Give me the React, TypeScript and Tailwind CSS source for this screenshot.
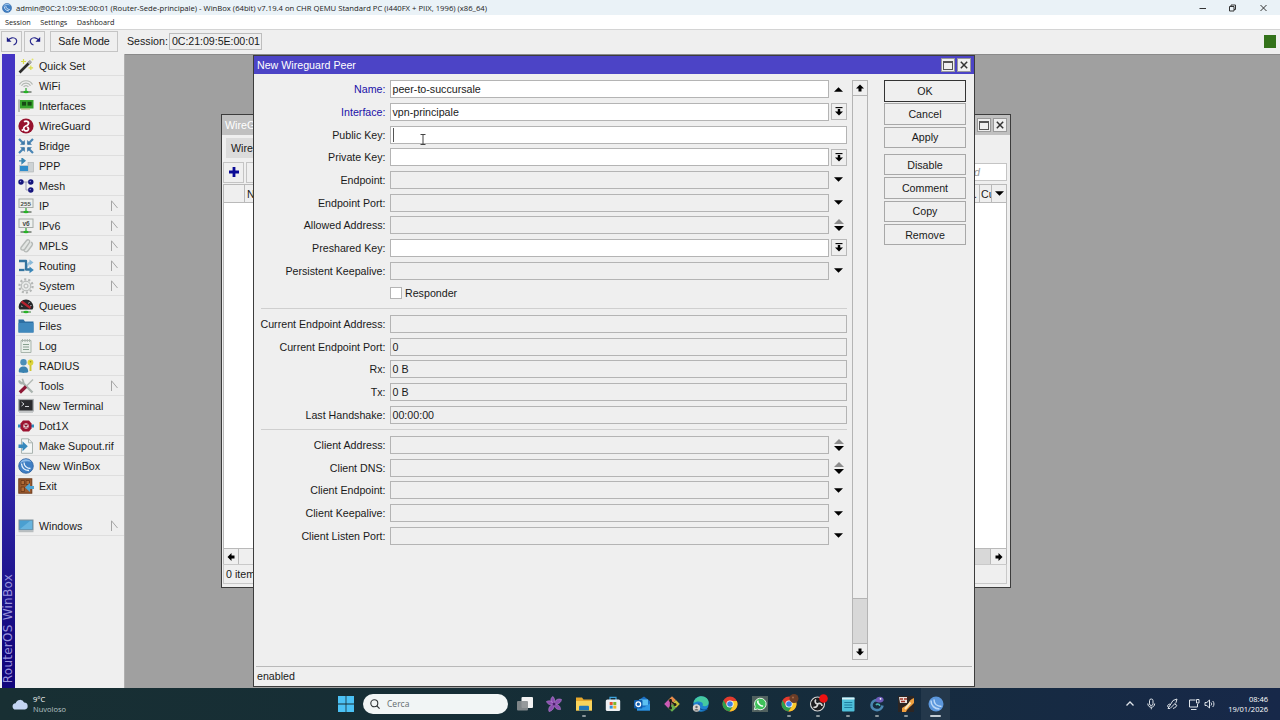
import type { ReactNode } from 'react';

type FieldKind = 'up' | 'select' | 'plain' | 'down' | 'updown' | 'readonly';

interface Field {
    label: string;
    value?: string;
    kind: FieldKind;
    white?: boolean;
    changed?: boolean;
    caret?: boolean;
}

const mainFields: Field[] = [
    { label: 'Name:', value: 'peer-to-succursale', kind: 'up', white: true, changed: true },
    { label: 'Interface:', value: 'vpn-principale', kind: 'select', white: true, changed: true },
    { label: 'Public Key:', kind: 'plain', white: true, caret: true },
    { label: 'Private Key:', kind: 'select', white: true },
    { label: 'Endpoint:', kind: 'down' },
    { label: 'Endpoint Port:', kind: 'down' },
    { label: 'Allowed Address:', kind: 'updown' },
    { label: 'Preshared Key:', kind: 'select', white: true },
    { label: 'Persistent Keepalive:', kind: 'down' },
];

const statusFields: Field[] = [
    { label: 'Current Endpoint Address:', kind: 'readonly' },
    { label: 'Current Endpoint Port:', value: '0', kind: 'readonly' },
    { label: 'Rx:', value: '0 B', kind: 'readonly' },
    { label: 'Tx:', value: '0 B', kind: 'readonly' },
    { label: 'Last Handshake:', value: '00:00:00', kind: 'readonly' },
];

const clientFields: Field[] = [
    { label: 'Client Address:', kind: 'updown' },
    { label: 'Client DNS:', kind: 'updown' },
    { label: 'Client Endpoint:', kind: 'down' },
    { label: 'Client Keepalive:', kind: 'down' },
    { label: 'Client Listen Port:', kind: 'down' },
];

function Svg16({ children, className = 'w-4 h-4' }: { children: ReactNode; className?: string }) {
    return (
        <svg viewBox="0 0 16 16" className={`${className} shrink-0`} fill="none">
            {children}
        </svg>
    );
}

function WinBoxIcon({ className }: { className?: string }) {
    return (
        <Svg16 className={className}>
            <circle cx="8" cy="8" r="7.3" fill="#3f7fc4" stroke="#2c5f9e" strokeWidth=".8" />
            <path d="M2 5.5A6.5 6.5 0 0 1 13.5 4C10 2.500 5 3 2 5.500z" fill="#8fbdea" />
            <path d="M3.500 5.500c.3 4 3 6.800 7.500 7" stroke="#e6f1fb" strokeWidth="1.300" />
            <path d="M6 4.500c.2 3.500 2.500 5.700 6.500 6" stroke="#e6f1fb" strokeWidth="1.300" />
        </Svg16>
    );
}

const netStem = (
    <>
        <path d="M8 10v4" stroke="#2fa52f" strokeWidth="1.200" />
        <path d="M2.500 14h11" stroke="#3c4a3c" strokeWidth="1.100" />
        <ellipse cx="8" cy="14" rx="2.600" ry="1.300" fill="#27b327" />
    </>
);

const menuItems: { label: string; icon: ReactNode; sub?: boolean }[] = [
    {
        label: 'Quick Set',
        icon: (
            <Svg16>
                <path d="M1.500 14.500L12.500 3.500" stroke="#2c2c2c" strokeWidth="2.600" />
                <path d="M10.500 5.500l2.500-2.500" stroke="#a9a9a9" strokeWidth="2.600" />
                <path d="M5.500 1v5M3 3.500h5M12.800 7.500v4.500M10.500 9.800h4.600" stroke="#d9dc4a" strokeWidth="1.200" />
                <circle cx="14.500" cy="1.500" r="1" fill="#e4e66a" />
            </Svg16>
        ),
    },
    {
        label: 'WiFi',
        icon: (
            <Svg16>
                <path d="M1.500 6.500a7.500 7.500 0 0 1 13 0M3.500 7.700a5.200 5.200 0 0 1 9 0M5.600 8.900a2.900 2.900 0 0 1 4.800 0" stroke="#b3b8b3" strokeWidth="1.200" />
                {netStem}
            </Svg16>
        ),
    },
    {
        label: 'Interfaces',
        icon: (
            <Svg16>
                <path d="M1 1.500v12.500" stroke="#9a9f9a" strokeWidth="1.300" />
                <rect x="2" y="2" width="13.500" height="8.500" fill="#37a32d" />
                <rect x="4" y="3.800" width="4" height="3.800" fill="#174a14" />
                <rect x="9.600" y="3.800" width="4" height="3.800" fill="#174a14" />
                <path d="M3 11h9" stroke="#a9b36a" strokeWidth="1" />
            </Svg16>
        ),
    },
    {
        label: 'WireGuard',
        icon: (
            <Svg16>
                <circle cx="8" cy="8" r="7.600" fill="#97122e" />
                <path d="M6 3.800c2.500-1.800 5.500.2 4.200 2.500C9.300 8 6 7.700 5.700 10.200c-.2 2 1.800 3.300 3.700 2.400 1.800-1 1.300-3.400-.6-3.400" stroke="#fff" strokeWidth="1.800" />
                <circle cx="4.500" cy="12" r="1" fill="#fff" />
            </Svg16>
        ),
    },
    {
        label: 'Bridge',
        icon: (
            <Svg16>
                <path d="M1 1l5 5M15 1l-5 5M1 15l5-5M15 15l-5-5" stroke="#4a86b5" strokeWidth="2.200" />
                <path d="M6.800 2v4.800H2zM9.200 2v4.800H14zM6.800 14V9.200H2zM9.200 14V9.200H14z" fill="#3d78a8" />
            </Svg16>
        ),
    },
    {
        label: 'PPP',
        icon: (
            <Svg16>
                <path d="M1 2.800h4M4 .3l3 2.500-3 2.500z" stroke="#3a86b0" fill="#3a86b0" strokeWidth="1.300" />
                <rect x="10" y="4.500" width="5.500" height="9.500" fill="#cdd2d4" stroke="#a8adaf" strokeWidth=".6" />
                <rect x="1" y="7" width="10" height="7.500" fill="#bfc8cc" />
                <rect x="2" y="8" width="8" height="5" fill="#2f8dcb" />
            </Svg16>
        ),
    },
    {
        label: 'Mesh',
        icon: (
            <Svg16>
                <path d="M3 4h9M8 4v8h5" stroke="#9a9ab8" strokeWidth="1" />
                <circle cx="3" cy="4" r="2.700" fill="#15157c" />
                <circle cx="12.800" cy="4" r="2.700" fill="#15157c" />
                <circle cx="12.800" cy="12" r="2.700" fill="#15157c" />
                <circle cx="2.500" cy="3.500" r=".7" fill="#8d8de0" />
                <circle cx="12.300" cy="3.500" r=".7" fill="#8d8de0" />
                <circle cx="12.300" cy="11.500" r=".7" fill="#8d8de0" />
            </Svg16>
        ),
    },
    {
        label: 'IP',
        sub: true,
        icon: (
            <Svg16>
                <rect x="1" y="1" width="14" height="8.500" fill="#eef1ef" stroke="#a7aca8" />
                <text x="2.600" y="7.500" fontSize="6.200" fontWeight="bold" fontFamily="Liberation Sans" fill="#4a4f4a">255</text>
                {netStem}
            </Svg16>
        ),
    },
    {
        label: 'IPv6',
        sub: true,
        icon: (
            <Svg16>
                <rect x="1" y="1" width="14" height="8.500" fill="#eef1ef" stroke="#a7aca8" />
                <text x="4.400" y="7.600" fontSize="6.500" fontWeight="bold" fontFamily="Liberation Sans" fill="#4a4f4a">v6</text>
                {netStem}
            </Svg16>
        ),
    },
    {
        label: 'MPLS',
        sub: true,
        icon: (
            <Svg16>
                <path d="M3 9.500L8.500 2.500c1.500-1.500 4-.5 3 2L7 11c-1.500 2-5 1-4-1.500zM6 12.500c1 2 3 1.500 4 .2l4-5.200c1-1.700.3-3-1.200-3.300" stroke="#b5b9b7" strokeWidth="1.400" fill="#e2e5e3" />
            </Svg16>
        ),
    },
    {
        label: 'Routing',
        sub: true,
        icon: (
            <Svg16>
                <path d="M7 11.500c2-.5 2-6.500 5-7" stroke="#9dc4dd" strokeWidth="2" />
                <path d="M11.500 1.500l4 3-4 3z" fill="#8ab9d8" />
                <path d="M1 3h7v8.500h4" stroke="#35759f" strokeWidth="2.300" strokeLinejoin="round" />
                <path d="M1 12h5.500" stroke="#35759f" strokeWidth="2.300" />
                <path d="M11.500 8.500l4.300 3.400-4.300 3.400z" fill="#3a86b8" />
            </Svg16>
        ),
    },
    {
        label: 'System',
        sub: true,
        icon: (
            <Svg16>
                <circle cx="8" cy="8" r="6.600" stroke="#b3b6b5" strokeWidth="2.200" strokeDasharray="2.100 2.050" />
                <circle cx="8" cy="8" r="4.800" fill="#e6e8e7" stroke="#b3b6b5" strokeWidth="1" />
                <circle cx="8" cy="8" r="2" fill="#efefef" stroke="#b3b6b5" />
            </Svg16>
        ),
    },
    {
        label: 'Queues',
        icon: (
            <Svg16>
                <path d="M.6 9a7.400 7.400 0 1 1 14.800 0c0 1-.5 1.800-1 2.500H1.600c-.5-.7-1-1.500-1-2.500z" fill="#26282a" />
                <path d="M3 8l1.500.5M5 4.500l1 1.300M11.500 4l-1 1.500M13.500 7.500L12 8" stroke="#c9cccd" strokeWidth=".9" />
                <path d="M3.500 3.500l9 6.500" stroke="#b5222e" strokeWidth="2.200" />
                <path d="M3 14h10" stroke="#3c7a3c" />
                <ellipse cx="8" cy="14" rx="2.600" ry="1.300" fill="#27b327" />
            </Svg16>
        ),
    },
    {
        label: 'Files',
        icon: (
            <Svg16>
                <path d="M.5 1.500h5l1.500 2h8.500v11H.5z" fill="#2d6fa3" />
                <path d="M.5 5h15v9.500H.5z" fill="#3f88bd" />
            </Svg16>
        ),
    },
    {
        label: 'Log',
        icon: (
            <Svg16>
                <path d="M3 2.500h10v12H3z" fill="#e9efea" stroke="#a9b5ad" />
                <path d="M4.500 1v3M7 1v3M9.300 1v3M11.600 1v3" stroke="#a9b5ad" strokeWidth="1" />
                <path d="M5 6.500h6M5 9h6M5 11.500h6" stroke="#87a08f" strokeWidth="1.100" />
            </Svg16>
        ),
    },
    {
        label: 'RADIUS',
        icon: (
            <Svg16>
                <circle cx="5.500" cy="4.300" r="3.200" fill="#4a8fb8" />
                <path d="M.8 14c-.3-4 2-5.500 4.700-5.500S10.400 10 10.200 14c-2 1.200-7.500 1.200-9.400 0z" fill="#3a82b0" />
                <circle cx="12.500" cy="4.500" r="2.900" fill="#dcd43a" />
                <circle cx="12.500" cy="3.700" r=".8" fill="#8f8a1c" />
                <path d="M12.500 7v6" stroke="#cfc52e" strokeWidth="1.900" />
            </Svg16>
        ),
    },
    {
        label: 'Tools',
        sub: true,
        icon: (
            <Svg16>
                <path d="M14.500 14.500L5 5" stroke="#a9b3ae" strokeWidth="2.300" />
                <path d="M1 2.500L4 5l1.500-1L4.300.8M1 2.500c0 2 1.500 3.500 3.500 3L6 4" stroke="#a9b3ae" strokeWidth="1.600" />
                <path d="M15 1.500L8 8.500" stroke="#b4bbb7" strokeWidth="1.500" />
                <path d="M8 8.500L1.800 14.500" stroke="#8e1835" strokeWidth="3.200" />
            </Svg16>
        ),
    },
    {
        label: 'New Terminal',
        icon: (
            <Svg16>
                <rect x=".8" y="1.500" width="14.400" height="11.500" fill="#2b2c2e" stroke="#a8acae" strokeWidth="1.200" />
                <path d="M3.500 4l2.500 2-2.500 2M7 8.500h4" stroke="#d5d8da" strokeWidth="1" />
                <path d="M1 14.300h14" stroke="#c0c3c5" strokeWidth="1.200" />
            </Svg16>
        ),
    },
    {
        label: 'Dot1X',
        icon: (
            <Svg16>
                <path d="M0 8h3M13 8h3" stroke="#2f8dc0" strokeWidth="3" />
                <path d="M5 2.500h6L13.500 5.500v5L11 13.500H5L2.500 10.500v-5z" fill="#9c1330" />
                <circle cx="8" cy="8" r="2.700" fill="#e9dcdf" />
                <path d="M6.500 6.500l3 3M9.500 6.500l-3 3" stroke="#8d1029" strokeWidth="1.200" />
            </Svg16>
        ),
    },
    {
        label: 'Make Supout.rif',
        icon: (
            <Svg16>
                <path d="M3.500.8h7l4 4v10.500h-11z" fill="#f3f6f5" stroke="#a9b3b0" />
                <path d="M10.500.8v4h4" stroke="#a9b3b0" />
                <path d="M.5 6.500h4V3.300l5.300 5-5.300 5V10h-4z" fill="#3689bd" />
            </Svg16>
        ),
    },
    { label: 'New WinBox', icon: <WinBoxIcon className="w-4 h-4" /> },
    {
        label: 'Exit',
        icon: (
            <Svg16>
                <rect x=".8" y=".8" width="13" height="14.400" fill="#9c5a2e" stroke="#6d3a1a" />
                <path d="M3 2.500h3.500v4H3zM8 2.500h3.500v4H8zM3 9h3.500v4.500H3z" stroke="#6d3a1a" strokeWidth=".9" fill="#b06c3a" />
                <path d="M16 8h-4V5L7 9.500l5 4.500v-3h4z" fill="#4fa3d3" />
            </Svg16>
        ),
    },
];

function UpDown() {
    return (
        <svg viewBox="0 0 10 12" className="w-[10px] h-3">
            <path d="M0 5L5 0l5 5z" fill="#8c8c8c" />
            <path d="M0 7h10l-5 5z" fill="#000" />
        </svg>
    );
}

function Triangle({ up }: { up?: boolean }) {
    return (
        <svg viewBox="0 0 10 5" className="w-[9px] h-[5px]">
            <path d={up ? 'M0 5L5 0l5 5z' : 'M0 0h10L5 5z'} fill="#000" />
        </svg>
    );
}

// Short, fat arrow used by the scrollbar ends
function ScrollArrow({ className = '' }: { className?: string }) {
    return (
        <svg viewBox="0 0 8 8" className={`w-2 h-2 ${className}`}>
            <path d="M4 .5L8 4.500H5.500V7.500h-3V4.500H0z" fill="#000" />
        </svg>
    );
}

function FieldControl({ kind }: { kind: FieldKind }) {
    if (kind === 'select') {
        return (
            <div className="w-4 h-[17px] ml-[2px] border border-[#b9b9b9] flex items-center justify-center">
                <svg viewBox="0 0 8 9" className="w-2 h-[9px]">
                    <path d="M.5.600h7" stroke="#000" strokeWidth="1.100" />
                    <path d="M2.800 2h2.400v2.500H8L4 8.500 0 4.500h2.800z" fill="#000" />
                </svg>
            </div>
        );
    }
    return (
        <div className="w-[18px] pl-px flex items-center justify-center">
            {kind === 'up' && <Triangle up />}
            {kind === 'down' && <Triangle />}
            {kind === 'updown' && <UpDown />}
        </div>
    );
}

function FieldRow({ field }: { field: Field }) {
    const wide = field.kind === 'plain' || field.kind === 'readonly';
    return (
        <div className="flex items-center h-[22.67px]">
            <div className={`w-[132px] text-right pr-[4.500px] shrink-0 whitespace-nowrap ${field.changed ? 'text-[#1c0fa8]' : 'text-[#1a1a1a]'}`}>
                {field.label}
            </div>
            <div
                className={`h-[18px] border border-[#b4b4b4] flex items-center pl-[1.500px] ${wide ? 'w-[457px]' : 'w-[439px]'} ${field.white ? 'bg-white' : ''}`}
            >
                {field.value}
                {field.caret && <span className="w-px h-[14px] bg-[#555]" />}
            </div>
            {!wide && <FieldControl kind={field.kind} />}
        </div>
    );
}

function Divider() {
    return (
        <div className="h-2 flex items-center">
            <div className="ml-[3px] w-[587px] h-px bg-[#cfcfcf]" />
        </div>
    );
}

function CaptionButtons() {
    return (
        <div className="flex gap-[2px]">
            <div className="w-[14px] h-[14px] bg-[#efefef] border border-[#9a9a9a] flex items-center justify-center">
                <div className="w-[10px] h-[9px] border border-t-2 border-[#555]" />
            </div>
            <div className="w-[14px] h-[14px] bg-[#efefef] border border-[#9a9a9a] flex items-center justify-center">
                <svg viewBox="0 0 8 8" className="w-2 h-2">
                    <path d="M.8.8l6.400 6.400M7.200.8L.8 7.200" stroke="#333" strokeWidth="1.500" />
                </svg>
            </div>
        </div>
    );
}

function ActionButton({ label, primary }: { label: string; primary?: boolean }) {
    return (
        <div
            className={`h-[21.500px] mb-[1.830px] border flex items-center justify-center ${primary ? 'border-[#333]' : 'border-[#a8a8a8]'}`}
        >
            {label}
        </div>
    );
}

function PeerWindow() {
    return (
        <div className="absolute left-[128px] top-0 w-[722px] h-[632px] bg-[#efefef] border border-[#3c3c3c] flex flex-col">
            <div className="h-[18px] shrink-0 bg-[#4c44c6] flex items-center justify-between pl-[3px] pr-[3px] text-white">
                <span>New Wireguard Peer</span>
                <CaptionButtons />
            </div>
            <div className="flex grow pt-1">
                <div className="w-[593px] pl-[4px]">
                    {mainFields.map((f) => (
                        <FieldRow key={f.label} field={f} />
                    ))}
                    <div className="h-[22.67px] flex items-center pl-[132px]">
                        <div className="w-[12px] h-[12px] border border-[#b4b4b4] bg-white" />
                        <span className="pl-[3px]">Responder</span>
                    </div>
                    <Divider />
                    {statusFields.map((f) => (
                        <FieldRow key={f.label} field={f} />
                    ))}
                    <Divider />
                    {clientFields.map((f) => (
                        <FieldRow key={f.label} field={f} />
                    ))}
                </div>
                <div className="w-4 h-[580px] mt-[2px] ml-[5px] border border-[#b4b4b4] flex flex-col">
                    <div className="h-[15px] border-b border-[#b4b4b4] flex items-center justify-center">
                        <ScrollArrow />
                    </div>
                    <div className="grow" />
                    <div className="h-[46px] bg-[#d8d8d8] border-y border-[#b4b4b4]" />
                    <div className="h-[15px] flex items-center justify-center">
                        <ScrollArrow className="rotate-180" />
                    </div>
                </div>
                <div className="w-[82px] ml-4 mt-[2px]">
                    <ActionButton label="OK" primary />
                    <ActionButton label="Cancel" />
                    <ActionButton label="Apply" />
                    <div className="h-1" />
                    <ActionButton label="Disable" />
                    <ActionButton label="Comment" />
                    <ActionButton label="Copy" />
                    <ActionButton label="Remove" />
                </div>
            </div>
            <div className="h-[20px] shrink-0 ml-[2px] mr-[2px] border-t border-[#b9b9b9] flex items-center pl-px pb-[2px]">
                enabled
            </div>
        </div>
    );
}

function WireGuardWindow() {
    return (
        <div className="absolute left-[96px] top-[59px] w-[790px] h-[474px] bg-[#efefef] border border-[#3c3c3c] flex flex-col pl-px pr-[3px] overflow-hidden">
            <div className="h-5 shrink-0 -ml-px -mr-[3px] bg-[#c0c0c0] flex items-center justify-between pl-[3px] pr-[3px] text-white">
                <span>WireGuard</span>
                <CaptionButtons />
            </div>
            <div className="h-[25px] shrink-0 flex items-end pl-[3px]">
                <div className="h-[20px] mb-[2px] w-[70px] bg-[#dcdcdc] flex items-center pl-[5px]">WireGuard</div>
            </div>
            <div className="h-[24px] shrink-0 flex items-center justify-between">
                <div className="flex gap-[2px]">
                    <div className="w-[21px] h-[21px] border border-[#c4c4c4] flex items-center justify-center">
                        <svg viewBox="0 0 10 10" className="w-[10px] h-[10px]">
                            <path d="M5 0v10M0 5h10" stroke="#0a0a96" strokeWidth="2.800" />
                        </svg>
                    </div>
                    <div className="w-[21px] h-[21px] border border-[#c4c4c4]" />
                </div>
                <div className="w-[100px] h-[18px] border border-[#c4c4c4] bg-white flex items-center justify-end pr-[26px] italic text-[#999]">
                    Find
                </div>
            </div>
            <div className="grow bg-white border border-[#b9b9b9] flex flex-col">
                <div className="h-[18px] bg-[#efefef] border-b border-[#b9b9b9] flex justify-between">
                    <div className="flex items-center">
                        <div className="w-[21px] h-full border-r border-[#b9b9b9]" />
                        <span className="pl-[2px]">Name</span>
                    </div>
                    <div className="flex items-center">
                        <span className="pr-[2px]">...</span>
                        <div className="w-[12px] h-full border-l border-[#b9b9b9] overflow-hidden pl-px pt-[2px]">Cu</div>
                        <div className="w-[15px] h-full border-l border-[#b9b9b9] flex items-center justify-center">
                            <Triangle />
                        </div>
                    </div>
                </div>
            </div>
            <div className="h-[15px] shrink-0 border-x border-[#b9b9b9] bg-[#d8d8d8] flex justify-between">
                <div className="w-[15px] bg-[#efefef] border-r border-[#b9b9b9] flex items-center justify-center">
                    <ScrollArrow className="-rotate-90" />
                </div>
                <div className="w-[600px] mr-auto bg-[#efefef]" />
                <div className="w-4 bg-[#efefef] border-l border-[#b9b9b9] flex items-center justify-center">
                    <ScrollArrow className="rotate-90" />
                </div>
            </div>
            <div className="h-[20px] shrink-0 mb-[3px] border border-[#c9c9c9] flex items-center pl-[2px]">0 items</div>
        </div>
    );
}

function MenuRow({ label, icon, sub }: { label: string; icon?: ReactNode; sub?: boolean }) {
    return (
        <div className="h-5 ml-px border-b border-[#dedede] flex items-center">
            <div className="w-[23px] pl-[2px] flex">{icon}</div>
            <span className="grow whitespace-nowrap">{label}</span>
            {sub && (
                <svg viewBox="0 0 7 12" className="w-[7px] h-3 mr-[6px]">
                    <path d="M.5 11V.8L6.500 8" stroke="#a5a5a5" fill="none" />
                </svg>
            )}
        </div>
    );
}

function Sidebar() {
    return (
        <div className="flex w-[125px] shrink-0 bg-[#efefef] border-r border-[#b0b0b0]">
            <div className="w-[13px] ml-[2px] shrink-0 bg-linear-to-b from-[#4434c4] from-50% to-[#12067c] to-95% flex items-end justify-center pb-[5px]">
                <span className="[writing-mode:vertical-rl] rotate-180 font-['DejaVu_Sans'] text-[12px] leading-[13px] tracking-[0.250px] text-[#9a94dc] whitespace-nowrap">
                    RouterOS WinBox
                </span>
            </div>
            <div className="grow pt-[2px]">
                {menuItems.map((item) => (
                    <MenuRow key={item.label} label={item.label} icon={item.icon} sub={item.sub} />
                ))}
                <div className="h-5" />
                <MenuRow
                    label="Windows"
                    sub
                    icon={
                        <Svg16>
                            <rect x="1" y="2" width="14" height="10" fill="#4a9fd0" stroke="#7f8f99" />
                            <path d="M2 11L12 3h2v8z" fill="#68b4de" />
                            <path d="M.5 13.500h15" stroke="#b8bdbf" strokeWidth="1.500" />
                        </Svg16>
                    }
                />
            </div>
        </div>
    );
}

function Chrome() {
    return (
        <>
            <circle cx="8" cy="8" r="7.500" fill="#e33b2e" />
            <path d="M1.500 4.300A7.500 7.500 0 0 0 7.500 15.500L11.200 9.800 4.800 9.800z" fill="#2da04e" />
            <path d="M14.900 5H8l3.200 4.900-3.700 5.600A7.500 7.500 0 0 0 14.900 5z" fill="#f7c92c" />
            <circle cx="8" cy="8" r="3.600" fill="#fff" />
            <circle cx="8" cy="8" r="2.800" fill="#3a7de8" />
        </>
    );
}

const taskbarApps: { name: string; open?: boolean; active?: boolean; icon: ReactNode }[] = [
    {
        name: 'task-view',
        icon: (
            <>
                <rect x="4.500" y="1" width="11.500" height="11" rx="1" fill="#f2f2f2" />
                <rect x="0" y="5" width="11" height="9.500" rx="1" fill="#8b8f91" fillOpacity=".9" />
            </>
        ),
    },
    {
        name: 'flower',
        icon: (
            <>
                <path d="M8 8C4 6 4 2 7 .5 9 3 9 5 8 8zM8 8c1-4 4-6 7.500-4.500C15 7 12 8.500 8 8zM8 8c4 0 6.500 2 6.500 5.500C11 14 8.500 12 8 8zM8 8c.5 4-1.500 7-5 7.500C2 12 4 9 8 8zM8 8C4.500 9.500 1.500 8.500.5 5.500 3.500 4 6.500 5 8 8z" fill="#8c4fb0" stroke="#b883d6" strokeWidth=".6" />
                <circle cx="8" cy="8" r="1.500" fill="#4b1d6b" />
            </>
        ),
    },
    {
        name: 'explorer',
        open: true,
        icon: (
            <>
                <path d="M0 1.500h6l1.500 2H16v11H0z" fill="#e9a92c" />
                <path d="M0 5h16v9.500H0z" fill="#fad45c" />
                <path d="M3 14.500V11c0-.8.5-1.300 1.300-1.300h7.400c.8 0 1.300.5 1.300 1.300v3.500z" fill="#2477b8" />
            </>
        ),
    },
    {
        name: 'store',
        icon: (
            <>
                <path d="M5 4V1.300h6V4" stroke="#3fa4dd" strokeWidth="1.200" />
                <rect x=".8" y="3.500" width="14.400" height="11.500" rx="1.500" fill="#eef1f4" />
                <rect x="4.700" y="6" width="3" height="3" fill="#e8502c" />
                <rect x="8.300" y="6" width="3" height="3" fill="#7cb52c" />
                <rect x="4.700" y="9.600" width="3" height="3" fill="#2f8fd8" />
                <rect x="8.300" y="9.600" width="3" height="3" fill="#f0b429" />
            </>
        ),
    },
    {
        name: 'outlook',
        icon: (
            <>
                <path d="M3 5l7-4.500L16 5v9.500H3z" fill="#1b6fc2" />
                <path d="M5 3.500h9v6H5z" fill="#5cc0f2" />
                <path d="M3 8l7 3.500L16 7.500v7H3z" fill="#2f98e4" />
                <rect x="0" y="4" width="8.500" height="8.500" rx="1" fill="#0f5bab" />
                <circle cx="4.300" cy="8.200" r="2.300" stroke="#fff" strokeWidth="1.300" />
            </>
        ),
    },
    {
        name: 'git',
        icon: (
            <>
                <path d="M8 .2L11.900 4 8 8 4.100 4z" fill="#e88c4c" />
                <path d="M11.900 4l3.900 4-3.900 4L8 8z" fill="#c9c13b" />
                <path d="M8 8l3.900 4L8 15.800 4.100 12z" fill="#67b04f" />
                <path d="M4.100 4L8 8l-3.900 4L.2 8z" fill="#cb5bb5" />
                <path d="M6.500 3v9.500M6.500 5L11 8.500" stroke="#1b1b1b" strokeWidth="1.300" />
                <circle cx="6.500" cy="12" r="1.500" fill="#1b1b1b" />
                <circle cx="11" cy="8.500" r="1.500" fill="#1b1b1b" />
                <circle cx="6.500" cy="4.500" r="1.400" fill="#1b1b1b" />
            </>
        ),
    },
    {
        name: 'edge',
        icon: (
            <>
                <circle cx="8" cy="8" r="7.700" fill="#1f83cf" />
                <path d="M.5 7C1.500 2.500 5 .3 8.500.3c4.500 0 7.300 3.200 7.200 6.200 0 2.500-2 3.700-4 3.700s-2.500-.9-1.700-2C9.500 5 4 4.500.5 7z" fill="#45c9a0" />
                <path d="M6 7.500c-1.500 3 1 6.500 5 6.500 1.500 0 2.700-.5 3.500-1" stroke="#0f4f9a" strokeWidth="1.200" />
                <circle cx="3.500" cy="12" r="3.700" fill="#d9d4d0" />
                <circle cx="3.500" cy="11" r="1.200" fill="#6b6a6a" />
                <path d="M1.300 14.500c.3-2 4-2 4.400 0z" fill="#6b6a6a" />
            </>
        ),
    },
    { name: 'chrome', icon: <Chrome /> },
    {
        name: 'whatsapp',
        icon: (
            <>
                <rect width="16" height="16" fill="#51615f" />
                <path d="M2.300 13.700l.9-3A5.800 5.800 0 1 1 5.400 13z" fill="#3fc15a" stroke="#e9f6ec" strokeWidth="1" />
                <path d="M6 5.200c-1 1.300 2.500 5.300 4.500 4.800" stroke="#fff" strokeWidth="1.600" strokeLinecap="round" />
            </>
        ),
    },
    {
        name: 'chrome-profile',
        open: true,
        icon: (
            <>
                <Chrome />
                <circle cx="13" cy="2.500" r="4.500" fill="#6b3d27" />
                <circle cx="12" cy="1.500" r="1" fill="#a66b4a" />
            </>
        ),
    },
    {
        name: 'obs',
        open: true,
        icon: (
            <>
                <circle cx="7.500" cy="8" r="7" fill="#1d1d1f" stroke="#d8d8d8" strokeWidth="1.100" />
                <path d="M7.500 8c-2.500-.5-3-3-1.500-4.500M7.500 8c2-1.500 4.500-.3 4.500 2M7.500 8c.3 2.500-2 4-4 3" stroke="#d8d8d8" strokeWidth="1.700" />
                <circle cx="13.500" cy="2.500" r="4.300" fill="#ee1111" />
            </>
        ),
    },
    {
        name: 'notepad',
        open: true,
        icon: (
            <>
                <rect x="2" y="1.500" width="12.500" height="14" rx="1" fill="#4fc0da" />
                <path d="M2 1.500h12.500v2H2z" fill="#d6f1f8" />
                <path d="M4.300 6.500h8M4.300 9h8M4.300 11.500h8" stroke="#1c7c9e" strokeWidth="1" />
            </>
        ),
    },
    {
        name: 'lizard',
        open: true,
        icon: (
            <>
                <path d="M13.500 9.500C13 13 10 14.500 7 14 3 13.500 1.500 10 3 7c1-2 3.500-3.500 6-2.500" stroke="#4b86b0" strokeWidth="2.600" />
                <path d="M6.500 5c0-3 2.500-4.500 5-4.200 2.500.3 3.700 2.400 3 4-1 2-5 2.700-8 .2z" fill="#6d5bb8" />
                <path d="M7 9c1-1.500 4-1 3.500 1" stroke="#48b4b0" strokeWidth="1.600" />
                <circle cx="11.500" cy="2.800" r=".9" fill="#fff" />
            </>
        ),
    },
    {
        name: 'putty',
        open: true,
        icon: (
            <>
                <rect width="16" height="16" fill="#2c2523" />
                <path d="M16 2c-3 1-5 3-5.500 6L4 12v4h4c1-3 3-4 5-6l3-3z" fill="#ef9f3f" />
                <path d="M12.500 6.500L7 13" stroke="#fbe6b8" strokeWidth="2" />
                <path d="M1 1h8v6H2z" fill="#e8e3df" />
                <path d="M2 3h3M6 3h3M3 5.500h4" stroke="#a03426" strokeWidth="1.300" />
            </>
        ),
    },
    {
        name: 'winbox',
        open: true,
        active: true,
        icon: (
            <>
                <circle cx="8" cy="8" r="7.500" fill="#5c97dc" />
                <path d="M3 4.500c0 5 3.500 8.500 8.500 8.500M6 3.500c0 4.200 3 7 7.500 7" stroke="#bcd9f8" strokeWidth="1.500" />
            </>
        ),
    },
];

function Taskbar() {
    return (
        <div className="h-8 shrink-0 flex items-center bg-linear-to-r from-[#182f33] via-[#152d37] to-[#172849] text-white font-['Open_Sans',sans-serif] text-[7.500px]">
            <div className="w-[336px] pl-3 flex items-center">
                <svg viewBox="0 0 18 12" className="w-[17px] h-[11px] mr-1">
                    <path d="M4 11.500a3.500 3.500 0 0 1-.3-7A5 5 0 0 1 13 3.800a3.900 3.900 0 0 1 .8 7.700z" fill="#c3d5f3" />
                </svg>
                <div className="leading-[10.500px]">
                    <div>9°C</div>
                    <div className="text-[#b4c0c3]">Nuvoloso</div>
                </div>
            </div>
            <div className="w-[27px] pl-[1.500px]">
                <svg viewBox="0 0 16 16" className="w-4 h-4">
                    <path d="M0 0h7.600v7.600H0zM8.400 0H16v7.600H8.400zM0 8.400h7.600V16H0zM8.400 8.400H16V16H8.400z" fill="#4cc2f5" />
                </svg>
            </div>
            <div className="w-[145px] h-5 rounded-full bg-[#f1f5f5] flex items-center pl-[7px] text-[#636b6d] text-[8.500px]">
                <svg viewBox="0 0 10 10" className="w-[10px] h-[10px] mr-[7px]" fill="none">
                    <circle cx="4.300" cy="4.300" r="3.500" stroke="#2e3336" strokeWidth="1.100" />
                    <path d="M6.800 6.800L9.600 9.600" stroke="#2e3336" strokeWidth="1.200" />
                </svg>
                Cerca
            </div>
            <div className="flex ml-[2.500px]">
                {taskbarApps.map((app) => (
                    <div
                        key={app.name}
                        className={`w-[29.330px] h-8 flex flex-col items-center pt-2 ${app.active ? 'bg-[#24384b]' : ''}`}
                    >
                        <svg viewBox="0 0 16 16" className="w-4 h-4 shrink-0 overflow-visible" fill="none">
                            {app.icon}
                        </svg>
                        {app.open && (
                            <div
                                className={`mt-[3px] h-[2px] rounded-full ${app.active ? 'w-[11px] bg-[#c4cdd4]' : 'w-1 bg-[#8b979d]'}`}
                            />
                        )}
                    </div>
                ))}
            </div>
            <div className="ml-auto flex items-center pr-[12px]">
                <svg viewBox="0 0 96 16" className="w-24 h-4 mr-[8px]" fill="none" stroke="#dfe4ea" strokeWidth="1">
                    <path d="M4.500 9.500L8 6l3.500 3.500" strokeWidth="1.300" />
                    <rect x="27.500" y="3" width="3.500" height="6.500" rx="1.700" />
                    <path d="M25.800 7.500c0 5 6.900 5 6.900 0M29.300 11.300v2" />
                    <path d="M46 12.500l5-8 4-1.500-1 3.500-6 6zM48 8c-3 .5-3 3-1 3.500M53 8.500c3 0 2 2.500-2 4" />
                    <path d="M73.500 4h-6v7h8V8M69 13.500h5.500M74.500 3.500h2.500V7h-2.500z" />
                    <path d="M83 6.500h1.800L87.500 4v8L84.800 9.500H83zM89 6.500c.8.800.8 2.200 0 3M90.700 5c1.700 1.700 1.700 4.300 0 6" />
                </svg>
                <div className="leading-[10.500px] w-[42px] whitespace-nowrap flex flex-col items-end">
                    <div>08:46</div>
                    <div>19/01/2026</div>
                </div>
            </div>
        </div>
    );
}

export default function App() {
    return (
        <div className="w-[1280px] h-[720px] overflow-hidden flex flex-col bg-[#efefef] text-[#1a1a1a] font-['Liberation_Sans',Arial,sans-serif] text-[10.670px] leading-[14px]">
            <div className="h-[15px] shrink-0 bg-[#eaf2f7] flex items-center pl-[2px] font-['Open_Sans',sans-serif] text-[7.680px]">
                <WinBoxIcon className="w-[10px] h-[10px]" />
                <span className="pl-1 whitespace-nowrap">
                    admin@0C:21:09:5E:00:01 (Router-Sede-principale) - WinBox (64bit) v7.19.4 on CHR QEMU Standard PC (i440FX + PIIX, 1996) (x86_64)
                </span>
                <svg viewBox="0 0 70 8" className="w-[70px] h-2 ml-auto mr-3" fill="none" stroke="#333">
                    <path d="M1.500 4.500h6.500" />
                    <path d="M31.500 2.500h4.500v4.500h-4.500zM33 2.500V1h4.500v4.500H36" />
                    <path d="M62.500 1l6 6M68.500 1l-6 6" />
                </svg>
            </div>
            <div className="h-[14px] shrink-0 bg-white flex items-center pl-[5px] gap-[9.500px] font-['Open_Sans',sans-serif] text-[7.300px]">
                <span>Session</span>
                <span>Settings</span>
                <span>Dashboard</span>
            </div>
            <div className="h-[25px] shrink-0 border-t border-[#d4d4d4] flex items-center pl-px pb-[2px]">
                <div className="w-[21px] h-[21px] border border-[#c4c4c4] flex items-center justify-center">
                    <svg viewBox="0 0 12 10" className="w-3 h-[10px]" fill="none">
                        <path d="M2 4.500C4 1.500 8 .8 10 3.200c1.500 2 .5 4.800-2.500 5.800" stroke="#2b2b8e" strokeWidth="1.200" />
                        <path d="M.8 1v4.800h4.700z" fill="#1b1b84" />
                    </svg>
                </div>
                <div className="w-[21px] h-[21px] ml-[2px] border border-[#c4c4c4] flex items-center justify-center">
                    <svg viewBox="0 0 12 10" className="w-3 h-[10px] -scale-x-100" fill="none">
                        <path d="M2 4.500C4 1.500 8 .8 10 3.200c1.500 2 .5 4.800-2.500 5.800" stroke="#2b2b8e" strokeWidth="1.200" />
                        <path d="M.8 1v4.800h4.700z" fill="#1b1b84" />
                    </svg>
                </div>
                <div className="w-[68px] h-[21px] ml-[5px] border border-[#c4c4c4] flex items-center justify-center">Safe Mode</div>
                <span className="ml-[9px]">Session:</span>
                <div className="w-[93px] h-[17px] ml-px border border-[#bdbdbd] flex items-center pl-[2px] tracking-[-0.050px]">
                    0C:21:09:5E:00:01
                </div>
                <div className="w-3 h-[13px] ml-auto mr-1 bg-[#33721a]" />
            </div>
            <div className="h-[634px] shrink-0 flex">
                <Sidebar />
                <div className="relative grow bg-[#a0a0a0] border-t border-[#8a8a8a] overflow-hidden">
                    <WireGuardWindow />
                    <PeerWindow />
                    {/* I-beam pointer */}
                    <svg viewBox="0 0 6 11" className="absolute left-[295px] top-[79px] w-[6px] h-[11px]" fill="none" stroke="#444">
                        <path d="M.5.5h5M.5 10.500h5M3 .5v10" />
                    </svg>
                </div>
            </div>
            <Taskbar />
        </div>
    );
}
